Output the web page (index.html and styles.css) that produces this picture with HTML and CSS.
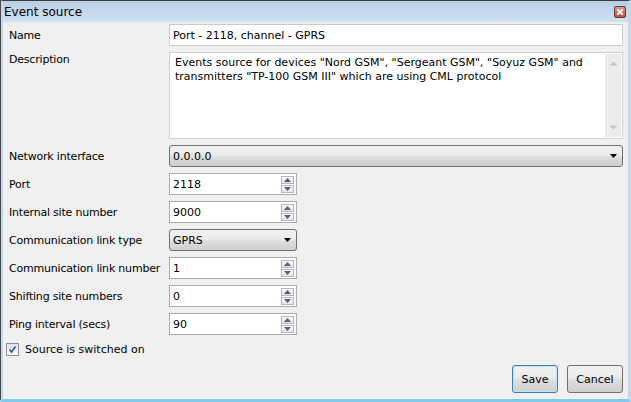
FILE: index.html
```html
<!DOCTYPE html>
<html>
<head>
<meta charset="utf-8">
<link rel="stylesheet" href="styles.css">
</head>
<body>
<div class="window">
  <div class="titlebar">
    <span class="title">Event source</span>
    <span class="close"><svg width="12" height="12" viewBox="0 0 12 12"><path d="M3.5 3.5 L8.5 8.5 M8.5 3.5 L3.5 8.5" stroke="#fff" stroke-width="2" stroke-linecap="square"/></svg></span>
  </div>
  <div class="content">
    <div class="form">
      <label class="lbl">Name</label>
      <div class="field text">Port - 2118, channel - GPRS</div>

      <label class="lbl lbl-top">Description</label>
      <div class="field textarea">
        <div class="ta-text"><span class="line">Events source for devices "Nord GSM", "Sergeant GSM", "Soyuz GSM" and</span><span class="line">transmitters "TP-100 GSM III" which are using CML protocol</span></div>
        <div class="vscroll">
          <svg width="9" height="5" viewBox="0 0 9 5"><path d="M0.5 4.5 L4.5 0.5 L8.5 4.5 Z" fill="#c4c4c4"/></svg>
          <svg width="9" height="5" viewBox="0 0 9 5"><path d="M0.5 0.5 L4.5 4.5 L8.5 0.5 Z" fill="#c4c4c4"/></svg>
        </div>
      </div>

      <label class="lbl">Network interface</label>
      <div class="field select wide"><span>0.0.0.0</span><svg class="arrow" width="7" height="4" viewBox="0 0 7 4"><path d="M0 0 H7 L3.5 4 Z" fill="#000"/></svg></div>

      <label class="lbl">Port</label>
      <div class="field spin"><span>2118</span><div class="spinbtns"><div class="sb"><svg width="7" height="4" viewBox="0 0 7 4"><path d="M0 4 L3.5 0 L7 4 Z" fill="#4d6185"/></svg></div><div class="sb"><svg width="7" height="4" viewBox="0 0 7 4"><path d="M0 0 L3.5 4 L7 0 Z" fill="#4d6185"/></svg></div></div></div>

      <label class="lbl">Internal site number</label>
      <div class="field spin"><span>9000</span><div class="spinbtns"><div class="sb"><svg width="7" height="4" viewBox="0 0 7 4"><path d="M0 4 L3.5 0 L7 4 Z" fill="#4d6185"/></svg></div><div class="sb"><svg width="7" height="4" viewBox="0 0 7 4"><path d="M0 0 L3.5 4 L7 0 Z" fill="#4d6185"/></svg></div></div></div>

      <label class="lbl">Communication link type</label>
      <div class="field select short"><span>GPRS</span><svg class="arrow" width="7" height="4" viewBox="0 0 7 4"><path d="M0 0 H7 L3.5 4 Z" fill="#000"/></svg></div>

      <label class="lbl">Communication link number</label>
      <div class="field spin"><span>1</span><div class="spinbtns"><div class="sb"><svg width="7" height="4" viewBox="0 0 7 4"><path d="M0 4 L3.5 0 L7 4 Z" fill="#4d6185"/></svg></div><div class="sb"><svg width="7" height="4" viewBox="0 0 7 4"><path d="M0 0 L3.5 4 L7 0 Z" fill="#4d6185"/></svg></div></div></div>

      <label class="lbl">Shifting site numbers</label>
      <div class="field spin"><span>0</span><div class="spinbtns"><div class="sb"><svg width="7" height="4" viewBox="0 0 7 4"><path d="M0 4 L3.5 0 L7 4 Z" fill="#4d6185"/></svg></div><div class="sb"><svg width="7" height="4" viewBox="0 0 7 4"><path d="M0 0 L3.5 4 L7 0 Z" fill="#4d6185"/></svg></div></div></div>

      <label class="lbl">Ping interval (secs)</label>
      <div class="field spin"><span>90</span><div class="spinbtns"><div class="sb"><svg width="7" height="4" viewBox="0 0 7 4"><path d="M0 4 L3.5 0 L7 4 Z" fill="#4d6185"/></svg></div><div class="sb"><svg width="7" height="4" viewBox="0 0 7 4"><path d="M0 0 L3.5 4 L7 0 Z" fill="#4d6185"/></svg></div></div></div>
    </div>

    <div class="check-row">
      <span class="checkbox"><svg width="11" height="11" viewBox="0 0 11 11"><path d="M2.5 5.5 L4.5 8 L8.5 2.5" fill="none" stroke="#3d5a9e" stroke-width="1.8"/></svg></span>
      <span class="check-label">Source is switched on</span>
    </div>

    <div class="footer">
      <div class="btn default">Save</div>
      <div class="btn">Cancel</div>
    </div>
  </div>
</div>
</body>
</html>
```

FILE: styles.css
```css
* { box-sizing: border-box; }
html, body {
  margin: 0;
  padding: 0;
  width: 631px;
  height: 402px;
  overflow: hidden;
  background: #f0f0f0;
  font-family: "DejaVu Sans", Verdana, sans-serif;
  font-size: 11px;
  color: #000;
}
.window {
  width: 631px;
  height: 402px;
  display: flex;
  flex-direction: column;
  border-top: 1px solid #3c3c3c;
  border-left: 3px solid #c5d7ea;
  border-right: 3px solid #c5d7ea;
  border-bottom: 3px solid #7ecbee;
  position: relative;
}
.window::before {
  content: "";
  position: absolute;
  left: -3px;
  top: -1px;
  width: 1px;
  height: 400px;
  background: #4a4a4a;
}
.titlebar {
  height: 21px;
  background: linear-gradient(#b8cfe8, #d1e1f2);
  display: flex;
  align-items: center;
  justify-content: space-between;
  padding: 0 2px 0 1px;
}
.title {
  font-size: 12px;
  color: #000;
}
.close {
  width: 12px;
  height: 12px;
  border: 1px solid #6b3a36;
  border-radius: 2px;
  background: linear-gradient(#d99a8c, #b5584a);
  display: flex;
  align-items: center;
  justify-content: center;
  margin-top: 1px;
}
.close svg { display: block; width: 10px; height: 10px; }
.content {
  flex: 1;
  display: flex;
  flex-direction: column;
  padding: 2px 2px 6px 6px;
  background: #f0f0f0;
}
.form {
  display: grid;
  grid-template-columns: 160px 454px;
  grid-template-rows: 22px 87px 22px 22px 22px 22px 22px 22px 22px;
  row-gap: 6px;
  align-items: center;
}
.lbl { white-space: nowrap; letter-spacing: -0.2px; }
.lbl-top { align-self: start; padding-top: 1px; }
.field {
  height: 22px;
  background: #fff;
  border: 1px solid #c7ccd3;
  display: flex;
  align-items: center;
  padding-left: 3px;
  white-space: nowrap;
}
.textarea {
  height: 87px;
  align-items: stretch;
  padding: 0;
  justify-content: space-between;
  border-color: #cfd3d8;
}
.ta-text {
  padding: 3px 0 0 5px;
  line-height: 14px;
  display: flex;
  flex-direction: column;
}
.line { white-space: nowrap; }
.vscroll {
  width: 16px;
  margin: 1px 1px 1px 0;
  background: #ececec;
  display: flex;
  flex-direction: column;
  justify-content: space-between;
  align-items: center;
  padding: 7px 0 7px;
}
.vscroll svg { display: block; }
.select {
  border: 1px solid #707070;
  border-radius: 3px;
  background: linear-gradient(#f2f2f2 0%, #ebebeb 45%, #dddddd 55%, #cfcfcf 100%);
  justify-content: space-between;
  padding-right: 5px;
}
.select.short { width: 128px; }
.arrow { display: block; }
.spin {
  width: 128px;
  border: 1px solid #abadb3;
  justify-content: space-between;
  padding-right: 2px;
}
.spinbtns {
  display: flex;
  flex-direction: column;
  gap: 1px;
}
.sb {
  width: 13px;
  height: 8px;
  border: 1px solid #b8b8b8;
  background: linear-gradient(#fafafa, #e6e6e6);
  display: flex;
  align-items: center;
  justify-content: center;
}
.sb svg { display: block; }
.check-row {
  margin-top: 6px;
  height: 16px;
  display: flex;
  align-items: center;
  gap: 6px;
  margin-left: -3px;
}
.checkbox {
  width: 13px;
  height: 13px;
  border: 1px solid #8e8f8f;
  background: linear-gradient(#e0e4ec, #fafbfd);
  display: flex;
  align-items: center;
  justify-content: center;
}
.checkbox svg { display: block; }
.footer {
  margin-top: auto;
  display: flex;
  justify-content: flex-end;
  gap: 9px;
  padding-right: 3px;
}
.btn {
  height: 28px;
  border: 1px solid #707070;
  border-radius: 3px;
  background: linear-gradient(#f2f2f2 0%, #ebebeb 45%, #dddddd 55%, #cfcfcf 100%);
  display: flex;
  align-items: center;
  justify-content: center;
  width: 56px;
}
.btn.default {
  width: 46px;
  border-color: #3c7fb1;
  box-shadow: inset 0 0 0 1px #bde6fd;
}
```
